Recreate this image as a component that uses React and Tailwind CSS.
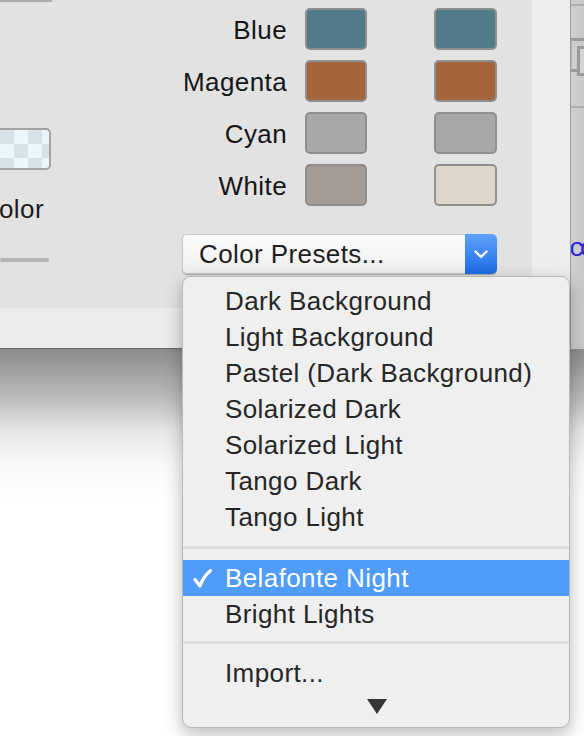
import React from 'react';

const rows = [
  { name: 'Blue', a: '#537c8a', b: '#537c8a' },
  { name: 'Magenta', a: '#a5643c', b: '#a5643c' },
  { name: 'Cyan', a: '#a8a8a9', b: '#a8a8a9' },
  { name: 'White', a: '#a49b96', b: '#ddd6cb' },
];

const presets = [
  'Dark Background',
  'Light Background',
  'Pastel (Dark Background)',
  'Solarized Dark',
  'Solarized Light',
  'Tango Dark',
  'Tango Light',
];

const Swatch = ({ color, w }) => (
  <div
    className={`h-[42px] rounded-[5px] border-2 border-[#8f8f8f] ${w}`}
    style={{ backgroundColor: color }}
  />
);

const MenuItem = ({ label, selected }) => (
  <div
    className={`flex h-[36px] items-center ${
      selected ? 'bg-[#4f9cf9] text-white' : 'text-[#262626]'
    }`}
  >
    <span className="flex w-[42px] pl-[10px]">
      {selected && (
        <svg width="19" height="19" viewBox="0 0 19 19">
          <path d="M2 10.5 L7 17 Q10 8 17.5 1.5" fill="none" stroke="white" strokeWidth="3.2" strokeLinecap="round" strokeLinejoin="round" />
        </svg>
      )}
    </span>
    <span className="text-[26px] leading-none tracking-[0.4px]">{label}</span>
  </div>
);

const Separator = ({ h, offset }) => (
  <div className={`${h} ${offset}`}>
    <div className="h-[3px] bg-[#dedede]" />
  </div>
);

const PresetMenu = () => (
  <div className="absolute left-[182px] top-[276px] w-[388px] h-[452px] rounded-[9px] border border-[#b9b9b9] bg-[#efefef] shadow-[0_6px_18px_rgba(0,0,0,0.28)] pt-[6px]">
    {presets.map(p => (
      <MenuItem key={p} label={p} />
    ))}
    <Separator h="h-[25px]" offset="pt-[11px]" />
    <MenuItem label="Belafonte Night" selected />
    <MenuItem label="Bright Lights" />
    <Separator h="h-[23px]" offset="pt-[9px]" />
    <MenuItem label="Import..." />
    <div className="flex justify-center pt-[8px] pl-[2px]">
      <svg width="20" height="15" viewBox="0 0 20 15">
        <polygon points="0,0 20,0 10,15" fill="#353535" />
      </svg>
    </div>
  </div>
);

export default function App() {
  return (
    <div className="relative h-[736px] w-[584px] overflow-hidden bg-white font-['Liberation_Sans',Arial,sans-serif]">
      <div className="flex h-[349px]">
        <div className="flex w-[570px] border-b border-[#6c6c6c]">
          <div className="flex w-[532px] flex-col">
            <div className="flex h-[308px] bg-[#e2e2e2]">
              <div className="flex w-[52px] flex-col">
                <div className="h-[2px] w-[52px] bg-[#acacac]" />
                <div className="mt-[126px] h-[42px] w-[51px] rounded-r-[5px] border-2 border-l-0 border-[#a3a3a3] bg-[conic-gradient(#eaf6fb_90deg,#d6e2e7_90deg_180deg,#eaf6fb_180deg_270deg,#d6e2e7_270deg)] bg-[length:28px_28px]" />
                <div className="mt-[24px] h-[30px] -ml-[1px] text-[26px] leading-[30px] tracking-[0.4px] text-[#1b1b1b]">
                  olor
                </div>
                <div className="mt-[34px] h-[4px] w-[49px] rounded-full bg-[#b5b5b5]" />
              </div>

              <div className="ml-[108px] flex flex-col pt-[8px]">
                <div className="flex flex-col gap-[10px]">
                  {rows.map(r => (
                    <div key={r.name} className="flex items-center">
                      <span className="w-[127px] pt-[2px] text-right text-[26px] leading-none tracking-[0.4px] text-[#161616]">
                        {r.name}
                      </span>
                      <div className="ml-[18px]">
                        <Swatch color={r.a} w="w-[62px]" />
                      </div>
                      <div className="ml-[67px]">
                        <Swatch color={r.b} w="w-[63px]" />
                      </div>
                    </div>
                  ))}
                </div>

                <div className="ml-[22px] mt-[28px] flex h-[40px] w-[315px] rounded-[5px] shadow-[0_1px_1px_rgba(0,0,0,0.25)]">
                  <div className="flex flex-1 items-center rounded-l-[5px] border border-r-0 border-[#c8c8c8] bg-[linear-gradient(#fbfbfb,#efefef)] pl-[16px] text-[26px] leading-none tracking-[0.4px] text-[#1e1e1e]">
                    Color Presets...
                  </div>
                  <div className="flex w-[32px] items-center justify-center rounded-r-[5px] bg-[linear-gradient(#5ea3fb,#1d6be7)]">
                    <svg width="14" height="9" viewBox="0 0 14 9">
                      <path d="M1.5 1.5 L7 7 L12.5 1.5" fill="none" stroke="white" strokeWidth="2.4" strokeLinecap="round" strokeLinejoin="round" />
                    </svg>
                  </div>
                </div>
              </div>
            </div>
            <div className="h-[40px] bg-[#ebebeb]" />
          </div>
          <div className="w-[38px] bg-[#ededed]" />
        </div>

        <div className="flex w-[14px] flex-col overflow-hidden border-l border-[#9d9d9d] bg-[linear-gradient(90deg,#cfcfcf,#c9c9c9)]">
          <div className="mt-[4px] h-[2px] bg-[#b0b0b0]" />
          <svg className="mt-[32px]" width="14" height="38" viewBox="0 0 14 38">
            <rect x="-1" y="1.5" width="20" height="31" fill="none" stroke="#9a9a9a" strokeWidth="3" />
            <rect x="7.5" y="9.5" width="12" height="27" fill="#d4d4d4" stroke="#9a9a9a" strokeWidth="3" />
          </svg>
          <div className="mt-[30px] h-[2px] bg-[#b0b0b0]" />
          <div className="mt-[128px] -ml-[2px] whitespace-nowrap font-['Liberation_Mono'] text-[26px] leading-none tracking-[-5px] text-[#2a22d8]">
            co
          </div>
        </div>
      </div>

      <div className="h-[387px] bg-[linear-gradient(#8c8c8c,#bcbcbc_50px,#e6e6e6_82px,#f8f8f8_115px,#ffffff_150px)]" />

      <PresetMenu />
    </div>
  );
}
